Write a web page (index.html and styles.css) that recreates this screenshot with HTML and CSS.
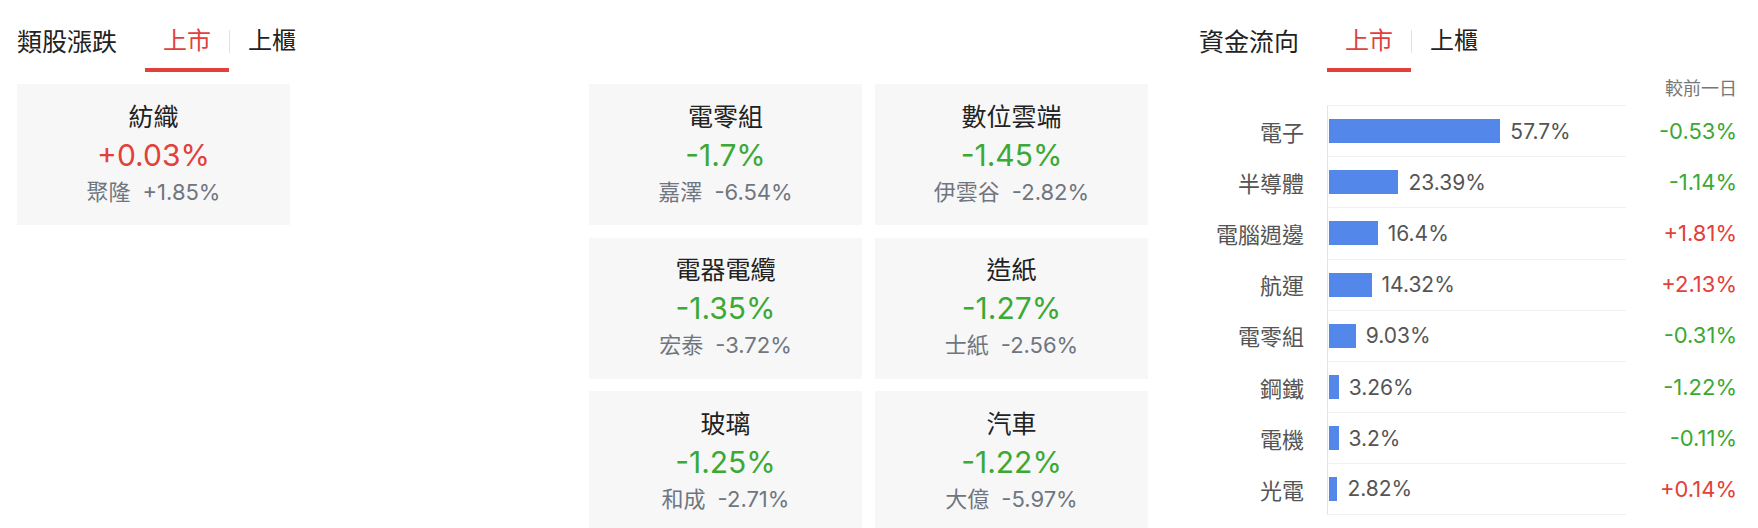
FILE: index.html
```html
<!DOCTYPE html>
<html>

<head>
  <title>類股漲跌 / 資金流向</title>
  <link rel="stylesheet" href="styles.css">
</head>

<body>
  <div class="page">
    <section class="sector">
      <div class="panel-head">
        <h2 class="panel-title">類股漲跌</h2>
        <div class="tabs">
          <span class="tab active">上市</span>
          <span class="tab-sep"></span>
          <span class="tab">上櫃</span>
        </div>
      </div>

      <div class="sector-grid">
        <div class="card col-1">
          <div class="card-name">紡織</div>
          <div class="card-pct up">+0.03%</div>
          <div class="card-lead"><span>聚隆</span><span class="lead-pct">+1.85%</span></div>
        </div>
        <div class="card col-3">
          <div class="card-name">電零組</div>
          <div class="card-pct down">-1.7%</div>
          <div class="card-lead"><span>嘉澤</span><span class="lead-pct">-6.54%</span></div>
        </div>
        <div class="card col-4">
          <div class="card-name">數位雲端</div>
          <div class="card-pct down">-1.45%</div>
          <div class="card-lead"><span>伊雲谷</span><span class="lead-pct">-2.82%</span></div>
        </div>
        <div class="card col-3">
          <div class="card-name">電器電纜</div>
          <div class="card-pct down">-1.35%</div>
          <div class="card-lead"><span>宏泰</span><span class="lead-pct">-3.72%</span></div>
        </div>
        <div class="card col-4">
          <div class="card-name">造紙</div>
          <div class="card-pct down">-1.27%</div>
          <div class="card-lead"><span>士紙</span><span class="lead-pct">-2.56%</span></div>
        </div>
        <div class="card col-3">
          <div class="card-name">玻璃</div>
          <div class="card-pct down">-1.25%</div>
          <div class="card-lead"><span>和成</span><span class="lead-pct">-2.71%</span></div>
        </div>
        <div class="card col-4">
          <div class="card-name">汽車</div>
          <div class="card-pct down">-1.22%</div>
          <div class="card-lead"><span>大億</span><span class="lead-pct">-5.97%</span></div>
        </div>
      </div>
    </section>

    <section class="flow">
      <div class="panel-head">
        <h2 class="panel-title">資金流向</h2>
        <div class="tabs">
          <span class="tab active">上市</span>
          <span class="tab-sep"></span>
          <span class="tab">上櫃</span>
        </div>
      </div>

      <div class="flow-table">
        <div class="flow-caption">較前一日</div>

        <div class="flow-row">
          <span class="flow-name">電子</span>
          <div class="flow-track"><span class="flow-bar" style="width: 57.7%"></span><span class="flow-share">57.7%</span></div>
          <span class="flow-change down">-0.53%</span>
        </div>
        <div class="flow-row">
          <span class="flow-name">半導體</span>
          <div class="flow-track"><span class="flow-bar" style="width: 23.39%"></span><span class="flow-share">23.39%</span></div>
          <span class="flow-change down">-1.14%</span>
        </div>
        <div class="flow-row">
          <span class="flow-name">電腦週邊</span>
          <div class="flow-track"><span class="flow-bar" style="width: 16.4%"></span><span class="flow-share">16.4%</span></div>
          <span class="flow-change up">+1.81%</span>
        </div>
        <div class="flow-row">
          <span class="flow-name">航運</span>
          <div class="flow-track"><span class="flow-bar" style="width: 14.32%"></span><span class="flow-share">14.32%</span></div>
          <span class="flow-change up">+2.13%</span>
        </div>
        <div class="flow-row">
          <span class="flow-name">電零組</span>
          <div class="flow-track"><span class="flow-bar" style="width: 9.03%"></span><span class="flow-share">9.03%</span></div>
          <span class="flow-change down">-0.31%</span>
        </div>
        <div class="flow-row">
          <span class="flow-name">鋼鐵</span>
          <div class="flow-track"><span class="flow-bar" style="width: 3.26%"></span><span class="flow-share">3.26%</span></div>
          <span class="flow-change down">-1.22%</span>
        </div>
        <div class="flow-row">
          <span class="flow-name">電機</span>
          <div class="flow-track"><span class="flow-bar" style="width: 3.2%"></span><span class="flow-share">3.2%</span></div>
          <span class="flow-change down">-0.11%</span>
        </div>
        <div class="flow-row">
          <span class="flow-name">光電</span>
          <div class="flow-track"><span class="flow-bar" style="width: 2.82%"></span><span class="flow-share">2.82%</span></div>
          <span class="flow-change up">+0.14%</span>
        </div>
      </div>
    </section>
  </div>
</body>

</html>
```

FILE: styles.css
```css
body {
  margin: 0;
  font-family: Inter, "Noto Sans CJK TC", sans-serif;
  color: #222;
  background-color: #fff;
  overflow: hidden;
}

.page {
  display: flex;
  justify-content: space-between;
  padding: 0 21px 0 17px;
  height: 528px;
}

.up {
  color: #e2413b;
}

.down {
  color: #3ba935;
}

/* header: title + market tabs */

.panel-head {
  display: flex;
  align-items: flex-start;
  height: 72px;
}

.panel-title {
  margin: 29px 28px 0 0;
  font-size: 25px;
  font-weight: normal;
  line-height: 26px;
  color: #222;
}

.tabs {
  display: flex;
  align-items: flex-start;
}

.tab {
  padding: 26px 18px 12px;
  font-size: 24px;
  line-height: 30px;
  color: #222;
  border-bottom: 4px solid transparent;
}

.tab.active {
  color: #e2413b;
  border-bottom-color: #e2413b;
}

.tab-sep {
  width: 1px;
  height: 23px;
  margin-top: 30px;
  background-color: #e2e2e2;
}

/* sector cards */

.sector {
  width: 1131px;
}

.sector-grid {
  display: grid;
  grid-template-columns: repeat(4, 273px);
  grid-auto-rows: 141px;
  gap: 12.5px 13px;
  margin-top: 12px;
}

.col-1 {
  grid-column: 1;
  grid-row: 1;
}

.col-3 {
  grid-column: 3;
}

.col-4 {
  grid-column: 4;
}

.card {
  display: flex;
  flex-direction: column;
  align-items: center;
  justify-content: center;
  box-sizing: border-box;
  padding-bottom: 2px;
  background-color: #f7f7f7;
}

.card-name {
  margin-bottom: 1px;
  font-size: 25px;
  line-height: 34px;
  color: #222;
}

.card-pct {
  margin-bottom: 1px;
  font-size: 30px;
  line-height: 40px;
}

.card-lead {
  font-size: 22px;
  line-height: 32px;
  color: #6f7680;
}

.lead-pct {
  margin-left: 12px;
}

/* fund flow chart */

.flow {
  width: 538px;
}

.flow-caption {
  height: 33px;
  line-height: 33px;
  font-size: 18px;
  color: #777;
  text-align: right;
}

.flow-row {
  display: grid;
  grid-template-columns: 105px 299px 88px;
  column-gap: 23px;
  align-items: center;
  height: 51.2px;
}

.flow-name {
  font-size: 22px;
  color: #555;
  text-align: right;
}

.flow-track {
  display: flex;
  align-items: center;
  height: 100%;
  box-sizing: border-box;
  border-left: 1px solid #e4e4e4;
  border-top: 1px solid #f0f0f0;
  padding-left: 1px;
}

.flow-row:last-child .flow-track {
  border-bottom: 1px solid #f0f0f0;
}

.flow-bar {
  height: 24px;
  background-color: #5487ea;
}

.flow-share {
  margin-left: 10px;
  font-size: 21px;
  color: #555;
}

.flow-change {
  font-size: 22px;
  text-align: right;
}
```
